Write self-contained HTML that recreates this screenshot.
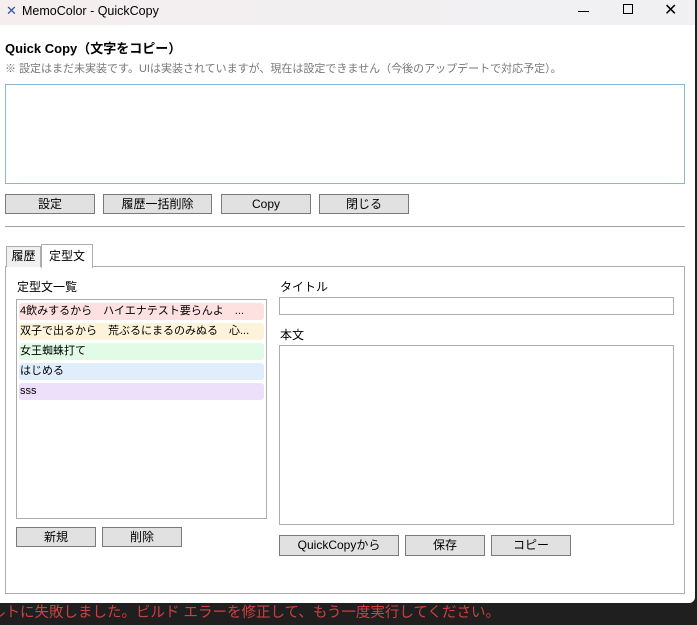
<!DOCTYPE html>
<html><head><meta charset="utf-8"><style>
*{box-sizing:border-box;margin:0;padding:0}
body{width:697px;height:625px;overflow:hidden;background:#1f1f1f;font-family:"Liberation Sans","Noto Sans CJK JP",sans-serif;font-size:12px;color:#000;position:relative}
.a{position:absolute}
.win{left:0;top:0;width:695px;height:603px;background:#fff;border-bottom-right-radius:6px}
.tb{left:0;top:0;width:695px;height:25px;background:linear-gradient(90deg,#f4eeee,#f0f0f3)}
.btn{position:absolute;background:#e1e1e1;border:1px solid #7a7a7a;text-align:center;font-size:12px;line-height:18px}
.item{position:absolute;left:19px;width:245px;height:17px;border-radius:3px;font-size:11px;line-height:17px;padding-left:1px}
</style></head><body>
<div class="a win"></div>
<div class="a tb"></div>
<div class="a" style="left:6px;top:3px;font-size:13px;color:#3050a0">✕</div>
<div class="a" style="left:22px;top:4px;font-size:12.5px">MemoColor - QuickCopy</div>
<div class="a" style="left:578px;top:11px;width:11px;height:1px;background:#000"></div>
<div class="a" style="left:623px;top:4px;width:10px;height:10px;border:1px solid #000"></div>
<div class="a" style="left:664px;top:0px;font-size:16px">✕</div>
<div class="a" style="left:5px;top:38px;font-size:13px;font-weight:bold">Quick Copy（文字をコピー）</div>
<div class="a" style="left:5px;top:60px;font-size:11px;color:#777">※ 設定はまだ未実装です。UIは実装されていますが、現在は設定できません（今後のアップデートで対応予定）。</div>
<div class="a" style="left:5px;top:84px;width:680px;height:100px;border:1px solid #8fb4cf"></div>
<div class="btn" style="left:5px;top:194px;width:90px;height:20px">設定</div>
<div class="btn" style="left:103px;top:194px;width:109px;height:20px">履歴一括削除</div>
<div class="btn" style="left:221px;top:194px;width:90px;height:20px">Copy</div>
<div class="btn" style="left:319px;top:194px;width:90px;height:20px">閉じる</div>
<div class="a" style="left:5px;top:226px;width:680px;height:1px;background:#a0a0a0"></div>
<div class="a" style="left:5px;top:266px;width:680px;height:328px;border:1px solid #acacac"></div>
<div class="a" style="left:6px;top:246px;width:35px;height:21px;background:#f0f0f0;border:1px solid #acacac;border-bottom:none;line-height:19px;text-align:center">履歴</div>
<div class="a" style="left:41px;top:244px;width:52px;height:24px;background:#fff;border:1px solid #acacac;border-bottom:none;line-height:22px;text-align:center">定型文</div>
<div class="a" style="left:17px;top:278px">定型文一覧</div>
<div class="a" style="left:16px;top:299px;width:251px;height:220px;border:1px solid #acacac"></div>
<div class="item" style="top:303px;background:#fde1e1">4飲みするから　ハイエナテスト要らんよ　...</div>
<div class="item" style="top:323px;background:#fdf3da">双子で出るから　荒ぶるにまるのみぬる　心...</div>
<div class="item" style="top:343px;background:#e1fbe7">女王蜘蛛打て</div>
<div class="item" style="top:363px;background:#e0eefc">はじめる</div>
<div class="item" style="top:383px;background:#ece0fb">sss</div>
<div class="a" style="left:280px;top:278px">タイトル</div>
<div class="a" style="left:279px;top:297px;width:395px;height:18px;border:1px solid #acacac"></div>
<div class="a" style="left:280px;top:326px">本文</div>
<div class="a" style="left:279px;top:345px;width:395px;height:180px;border:1px solid #acacac"></div>
<div class="btn" style="left:16px;top:527px;width:80px;height:20px">新規</div>
<div class="btn" style="left:102px;top:527px;width:80px;height:20px">削除</div>
<div class="btn" style="left:279px;top:535px;width:120px;height:21px">QuickCopyから</div>
<div class="btn" style="left:405px;top:535px;width:80px;height:21px">保存</div>
<div class="btn" style="left:491px;top:535px;width:80px;height:21px">コピー</div>
<div class="a" style="left:-9px;top:601px;font-size:14.5px;color:#d04040;white-space:nowrap">ルトに失敗しました。ビルド エラーを修正して、もう一度実行してください。</div>
</body></html>
